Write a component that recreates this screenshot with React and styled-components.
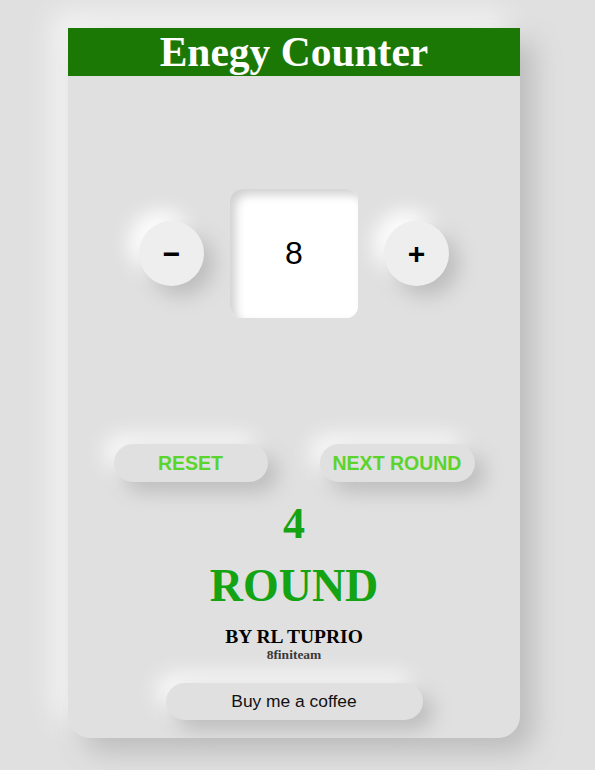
import React, { useState } from "react";
import styled, { createGlobalStyle } from "styled-components";

const GlobalStyle = createGlobalStyle`
  html, body {
    margin: 0;
    padding: 0;
    background: #e0e0e0;
  }
  body {
    font-family: "Liberation Serif", "Times New Roman", serif;
  }
`;

const Page = styled.div`
  width: 595px;
  height: 770px;
  padding: 28px 0 0 68px;
  box-sizing: border-box;
  overflow: hidden;
`;

const Card = styled.div`
  width: 452px;
  height: 710px;
  background: #e0e0e0;
  border-radius: 0 0 22px 22px;
  box-shadow: 14px 14px 28px #bcbcbc, -14px -14px 28px #f6f6f6;
  display: flex;
  flex-direction: column;
  align-items: center;
`;

const Header = styled.h1`
  margin: 0;
  width: 100%;
  height: 48px;
  background: #1b7805;
  color: #fff;
  font-size: 41.5px;
  font-weight: bold;
  line-height: 48px;
  text-align: center;
`;

const CounterRow = styled.div`
  margin-top: 113px;
  display: flex;
  align-items: center;
  gap: 26px;
`;

const RoundButton = styled.button`
  width: 65px;
  height: 65px;
  border: none;
  border-radius: 50%;
  background: #eeeeee;
  box-shadow: 10px 10px 20px #bdbdbd, -10px -10px 20px #ffffff;
  font-family: "Liberation Sans", Arial, sans-serif;
  font-size: 30px;
  font-weight: bold;
  color: #000;
  display: flex;
  align-items: center;
  justify-content: center;
  padding: 0;
  cursor: pointer;
`;

const Display = styled.div`
  width: 128px;
  height: 129px;
  border-radius: 12px;
  background: #ffffff;
  box-shadow: inset 6px 6px 10px #d2d2d2, inset -4px -4px 8px #ffffff;
  display: flex;
  align-items: center;
  justify-content: center;
  font-family: "Liberation Sans", Arial, sans-serif;
  font-size: 32px;
  color: #000;
`;

const ActionRow = styled.div`
  margin-top: 126px;
  display: flex;
  gap: 52px;
`;

const PillButton = styled.button`
  width: ${(p) => p.$w}px;
  height: ${(p) => p.$h}px;
  border: none;
  border-radius: 20px;
  background: #e0e0e0;
  box-shadow: 10px 10px 20px #bdbdbd, -10px -10px 20px #f8f8f8;
  font-family: "Liberation Sans", Arial, sans-serif;
  font-size: ${(p) => p.$fs}px;
  font-weight: ${(p) => (p.$bold ? "bold" : "normal")};
  color: ${(p) => p.$color};
  padding: 0;
  cursor: pointer;
`;

const RoundCount = styled.div`
  margin-top: 18px;
  color: #13a313;
  font-size: 44px;
  font-weight: bold;
  line-height: 48px;
`;

const RoundLabel = styled.div`
  margin-top: 12px;
  color: #13a313;
  font-size: 46px;
  font-weight: bold;
  line-height: 52px;
`;

const Author = styled.div`
  margin-top: 15px;
  font-size: 19.5px;
  font-weight: bold;
  color: #000;
  line-height: 20px;
`;

const Team = styled.div`
  font-size: 13.5px;
  font-weight: bold;
  color: #333;
  line-height: 16px;
`;

const Footer = styled.div`
  margin-top: 20px;
`;

export default function App() {
  const [count, setCount] = useState(8);
  const [round, setRound] = useState(4);
  return (
    <>
      <GlobalStyle />
      <Page>
        <Card>
          <Header>Enegy Counter</Header>
          <CounterRow>
            <RoundButton onClick={() => setCount(count - 1)}>−</RoundButton>
            <Display>{count}</Display>
            <RoundButton onClick={() => setCount(count + 1)}>+</RoundButton>
          </CounterRow>
          <ActionRow>
            <PillButton $w={154} $h={38} $fs={19.5} $bold $color="#5bd42c" onClick={() => setCount(0)}>
              RESET
            </PillButton>
            <PillButton $w={155} $h={38} $fs={19.5} $bold $color="#5bd42c" onClick={() => setRound(round + 1)}>
              NEXT ROUND
            </PillButton>
          </ActionRow>
          <RoundCount>{round}</RoundCount>
          <RoundLabel>ROUND</RoundLabel>
          <Author>BY RL TUPRIO</Author>
          <Team>8finiteam</Team>
          <Footer>
            <PillButton $w={257} $h={37} $fs={17.4} $color="#111">
              Buy me a coffee
            </PillButton>
          </Footer>
        </Card>
      </Page>
    </>
  );
}
